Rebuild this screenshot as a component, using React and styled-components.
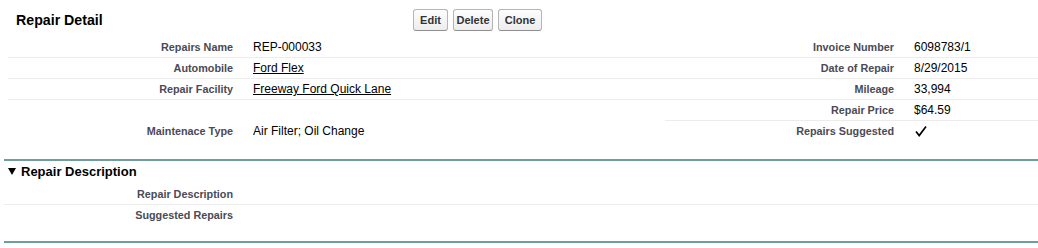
import styled, { createGlobalStyle } from "styled-components";

const GlobalStyle = createGlobalStyle`
  html, body {
    margin: 0;
    padding: 0;
    background: #fff;
    font-family: "Liberation Sans", Arial, sans-serif;
  }
`;

const Page = styled.div`
  width: 1038px;
  height: 248px;
  overflow: hidden;
  background: #fff;
`;

const Header = styled.div`
  display: flex;
  align-items: center;
  height: 40px;
  padding-left: 16px;
`;

const Title = styled.h2`
  margin: 0;
  width: 397px;
  font-size: 14.2px;
  font-weight: bold;
  color: #000;
`;

const Buttons = styled.div`
  display: flex;
  gap: 5px;
`;

const Button = styled.button`
  font-family: "Liberation Sans", Arial, sans-serif;
  font-size: 11px;
  font-weight: bold;
  color: #333;
  height: 22px;
  padding: 0 2px;
  border: 1px solid #b5b5b5;
  border-bottom-color: #8f8f8f;
  border-radius: 3px;
  background: linear-gradient(#fdfdfd, #ededed);
  width: ${(p) => p.$w}px;
`;

const Grid = styled.div`
  display: grid;
  grid-template-columns: 235px 422px 239px 1fr;
  margin-left: 8px;
  margin-top: -3px;
`;

const Label = styled.div`
  height: 21px;
  box-sizing: border-box;
  padding-right: 10px;
  display: flex;
  align-items: center;
  justify-content: flex-end;
  font-size: 10.8px;
  font-weight: bold;
  color: #4a4a56;
  border-bottom: 1px solid ${(p) => (p.$line ? "#ececec" : "transparent")};
`;

const Value = styled.div`
  height: 21px;
  box-sizing: border-box;
  padding-left: 10px;
  display: flex;
  align-items: center;
  font-size: 12px;
  color: #000;
  border-bottom: 1px solid ${(p) => (p.$line ? "#ececec" : "transparent")};
`;

const Link = styled.a`
  color: #000;
  text-decoration: underline;
`;

const Section = styled.div`
  margin-left: 4px;
  margin-top: 17px;
  border-top: 2px solid #6f9f9b;
`;

const SubHeader = styled.h3`
  margin: 0;
  height: 23px;
  box-sizing: border-box;
  padding: 0 0 2px 4px;
  display: flex;
  align-items: center;
  gap: 5px;
  font-size: 13px;
  font-weight: bold;
  color: #000;
`;

const Triangle = styled.span`
  width: 0;
  height: 0;
  border-left: 4px solid transparent;
  border-right: 4px solid transparent;
  border-top: 7px solid #000;
`;

const DescGrid = styled.div`
  display: grid;
  grid-template-columns: 239px 1fr;
`;

const Bottom = styled.div`
  margin-left: 4px;
  margin-top: 15px;
  border-top: 2px solid #6f9f9b;
`;

const Check = () => (
  <svg width="14" height="14" viewBox="0 0 14 14">
    <path d="M2 7.5 L5.2 11.5 L12 2.5" fill="none" stroke="#000" strokeWidth="1.7" />
  </svg>
);

const rows = [
  ["Repairs Name", "REP-000033", "Invoice Number", "6098783/1"],
  ["Automobile", <Link key="a">Ford Flex</Link>, "Date of Repair", "8/29/2015"],
  ["Repair Facility", <Link key="f">Freeway Ford Quick Lane</Link>, "Mileage", "33,994"],
  ["", "", "Repair Price", "$64.59"],
  ["Maintenace Type", "Air Filter; Oil Change", "Repairs Suggested", <Check key="c" />],
];

export default function App() {
  return (
    <Page>
      <GlobalStyle />
      <Header>
        <Title>Repair Detail</Title>
        <Buttons>
          <Button $w={35}>Edit</Button>
          <Button $w={40}>Delete</Button>
          <Button $w={44}>Clone</Button>
        </Buttons>
      </Header>
      <Grid>
        {rows.map((r, i) => {
          const line = i < 3;
          const rline = i < 4;
          return [
            <Label key={"l" + i} $line={line}>{r[0]}</Label>,
            <Value key={"v" + i} $line={line}>{r[1]}</Value>,
            <Label key={"rl" + i} $line={rline}>{r[2]}</Label>,
            <Value key={"rv" + i} $line={rline}>{r[3]}</Value>,
          ];
        })}
      </Grid>
      <Section>
        <SubHeader>
          <Triangle />
          Repair Description
        </SubHeader>
        <DescGrid>
          <Label $line>Repair Description</Label>
          <Value $line />
          <Label>Suggested Repairs</Label>
          <Value />
        </DescGrid>
      </Section>
      <Bottom />
    </Page>
  );
}
